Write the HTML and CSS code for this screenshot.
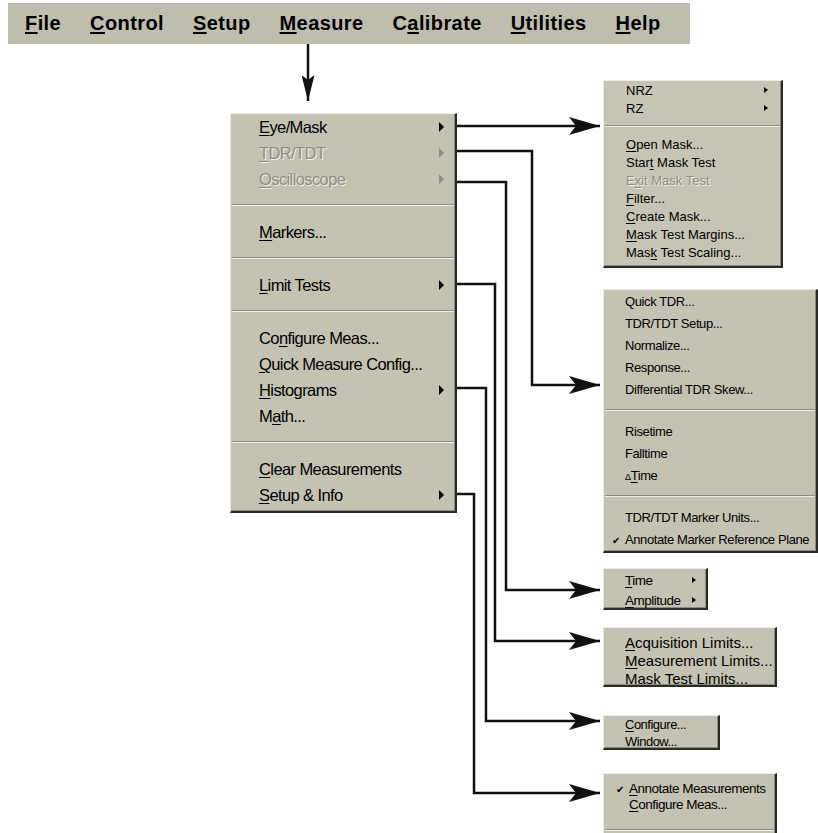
FILE: index.html
```html
<!DOCTYPE html>
<html lang="en">
<head>
    <meta charset="UTF-8">
    <title>Measure Menu Map</title>
    <link rel="stylesheet" href="styles.css">
</head>
<body>
    <div class="page">
        <div class="menubar">
            <span class="bar-item"><u>F</u>ile</span>
            <span class="bar-item"><u>C</u>ontrol</span>
            <span class="bar-item"><u>S</u>etup</span>
            <span class="bar-item"><u>M</u>easure</span>
            <span class="bar-item">C<u>a</u>librate</span>
            <span class="bar-item"><u>U</u>tilities</span>
            <span class="bar-item"><u>H</u>elp</span>
        </div>

        <div class="diagram">
            <div class="main-col">
                <div class="menu main">
                    <div class="item"><span><u>E</u>ye/Mask</span><i class="tri"></i></div>
                    <div class="item off"><span><u>T</u>DR/TDT</span><i class="tri"></i></div>
                    <div class="item off"><span><u>O</u>scilloscope</span><i class="tri"></i></div>
                    <div class="sep"></div>
                    <div class="item"><span><u>M</u>arkers...</span></div>
                    <div class="sep"></div>
                    <div class="item"><span><u>L</u>imit Tests</span><i class="tri"></i></div>
                    <div class="sep"></div>
                    <div class="item"><span>Co<u>n</u>figure Meas...</span></div>
                    <div class="item"><span><u>Q</u>uick Measure Config...</span></div>
                    <div class="item"><span><u>H</u>istograms</span><i class="tri"></i></div>
                    <div class="item"><span>M<u>a</u>th...</span></div>
                    <div class="sep"></div>
                    <div class="item"><span><u>C</u>lear Measurements</span></div>
                    <div class="item"><span><u>S</u>etup &amp; Info</span><i class="tri"></i></div>
                </div>
            </div>

            <div class="sub-col">
                <div class="menu eye">
                    <div class="item"><span>NRZ</span><i class="tri"></i></div>
                    <div class="item"><span>RZ</span><i class="tri"></i></div>
                    <div class="sep"></div>
                    <div class="item"><span><u>O</u>pen Mask...</span></div>
                    <div class="item"><span>Star<u>t</u> Mask Test</span></div>
                    <div class="item off"><span>E<u>x</u>it Mask Test</span></div>
                    <div class="item"><span><u>F</u>ilter...</span></div>
                    <div class="item"><span><u>C</u>reate Mask...</span></div>
                    <div class="item"><span><u>M</u>ask Test Margins...</span></div>
                    <div class="item"><span>Mas<u>k</u> Test Scaling...</span></div>
                </div>

                <div class="menu tdr">
                    <div class="item"><span>Quick TDR...</span></div>
                    <div class="item"><span>TDR/TDT Setup...</span></div>
                    <div class="item"><span>Normalize...</span></div>
                    <div class="item"><span>Response...</span></div>
                    <div class="item"><span>Differential TDR Skew...</span></div>
                    <div class="sep"></div>
                    <div class="item"><span>Risetime</span></div>
                    <div class="item"><span>Falltime</span></div>
                    <div class="item"><span><small>&Delta;</small><u>T</u>ime</span></div>
                    <div class="sep"></div>
                    <div class="item"><span>TDR/TDT Marker Units...</span></div>
                    <div class="item"><span><b class="check">&#10004;</b>Annotate Marker Reference Plane</span></div>
                </div>

                <div class="menu scope">
                    <div class="item"><span><u>T</u>ime</span><i class="tri"></i></div>
                    <div class="item"><span><u>A</u>mplitude</span><i class="tri"></i></div>
                </div>

                <div class="menu limits">
                    <div class="item"><span><u>A</u>cquisition Limits...</span></div>
                    <div class="item"><span><u>M</u>easurement Limits...</span></div>
                    <div class="item"><span>M<u>a</u>sk Test Limits...</span></div>
                </div>

                <div class="menu histo">
                    <div class="item"><span><u>C</u>onfigure...</span></div>
                    <div class="item"><span><u>W</u>indow...</span></div>
                </div>

                <div class="menu info">
                    <div class="item"><span><b class="check">&#10004;</b><u>A</u>nnotate Measurements</span></div>
                    <div class="item"><span><u>C</u>onfigure Meas...</span></div>
                    <div class="sep"></div>
                </div>
            </div>
        </div>

        <!-- connector arrows drawn over the menus -->
        <svg class="wires" width="818" height="833" viewBox="0 0 818 833">
            <defs>
                <marker id="head" markerUnits="userSpaceOnUse" markerWidth="31" markerHeight="18" refX="31" refY="9" orient="auto" viewBox="0 0 31 18">
                    <path d="M0,0 L31,9 L0,18 L7,9 Z" fill="#111"/>
                </marker>
                <marker id="down" markerUnits="userSpaceOnUse" markerWidth="26" markerHeight="13" refX="26" refY="6.5" orient="auto" viewBox="0 0 26 13">
                    <path d="M0,0 L26,6.5 L0,13 L5,6.5 Z" fill="#111"/>
                </marker>
            </defs>
            <g fill="none" stroke="#111" stroke-width="2.5">
                <path d="M308,44 V101" marker-end="url(#down)"/>
                <path d="M457,126 H600" marker-end="url(#head)"/>
                <path d="M457,151 H532 V385 H600" marker-end="url(#head)"/>
                <path d="M457,182 H506 V590 H600" marker-end="url(#head)"/>
                <path d="M457,284 H495 V641 H600" marker-end="url(#head)"/>
                <path d="M457,388 H486 V721 H600" marker-end="url(#head)"/>
                <path d="M457,494 H474 V793 H600" marker-end="url(#head)"/>
            </g>
        </svg>
    </div>
</body>
</html>
```

FILE: styles.css
```css
body {
    margin: 0;
    background: #ffffff;
    color: #000000;
    font-family: 'Liberation Sans', Arial, sans-serif;
}
.page {
    position: relative;
    width: 818px;
    height: 833px;
    overflow: hidden;
}
.menubar {
    display: flex;
    align-items: center;
    gap: 29px;
    width: 682px;
    height: 41px;
    margin: 3px 0 0 8px;
    padding-left: 17px;
    box-sizing: border-box;
    background: #bfbeae;
    font-size: 20px;
    font-weight: bold;
    letter-spacing: 0.4px;
}
.bar-item u {
    text-decoration-thickness: 2px;
    text-underline-offset: 2px;
}
.diagram {
    display: flex;
    align-items: flex-start;
}
.main-col {
    margin: 69px 0 0 230px;
}
.sub-col {
    display: flex;
    flex-direction: column;
    align-items: flex-start;
    margin: 36px 0 0 146px;
}

/* menus */
.menu {
    box-sizing: border-box;
    background: #c4c3b3;
    border-style: solid;
    border-width: 1px 2px 2px 1px;
    border-color: #ecebe2 #2a2a26 #2a2a26 #ecebe2;
    box-shadow: inset -1px -1px 0 #8c8b7e;
    font-family: 'Liberation Sans', Arial, sans-serif;
    overflow: hidden;
}
.item {
    display: flex;
    align-items: center;
    justify-content: space-between;
    white-space: nowrap;
}
.item u {
    text-decoration-thickness: 1px;
    text-underline-offset: 2px;
}
.sep {
    border-top: 1px solid #8d8c80;
    border-bottom: 1px solid #f3f2ea;
}
.tri {
    width: 0;
    height: 0;
    border-left: 5px solid #000;
    border-top: 4px solid transparent;
    border-bottom: 4px solid transparent;
}
.off {
    color: #8e8d82;
    text-shadow: 1px 1px 0 #f1f0e8;
}
.off .tri {
    border-left-color: #8e8d82;
}
.check {
    display: inline-block;
    width: 12px;
    margin-left: -13px;
    margin-right: 1px;
    font-size: 10px;
    font-weight: normal;
    letter-spacing: 0;
}

.main {
    width: 227px;
    height: 400px;
    font-size: 16.5px;
    letter-spacing: -0.6px;
}
.main .item {
    height: 26px;
    padding: 0 11px 0 28px;
}
.main .sep {
    margin: 12px 1px 13px 1px;
}
.main .tri {
    border-left-width: 5px;
    border-top-width: 5px;
    border-bottom-width: 5px;
}

.eye {
    width: 180px;
    height: 188px;
    font-size: 13px;
    background: #c6c5b5;
}
.eye .item {
    height: 18px;
    padding: 0 13px 0 22px;
}
.eye .sep {
    margin: 8px 1px 8px 1px;
}
.eye .tri {
    border-left-width: 4px;
    border-top-width: 3px;
    border-bottom-width: 3px;
}

.tdr {
    width: 215px;
    height: 264px;
    margin-top: 21px;
    font-size: 13px;
    letter-spacing: -0.4px;
}
.tdr .item {
    height: 22px;
    padding-left: 21px;
}
.tdr .sep {
    margin: 9px 1px 9px 1px;
}
.tdr small {
    font-size: 9px;
}

.scope {
    width: 105px;
    height: 42px;
    margin-top: 15px;
    padding-top: 1px;
    font-size: 13.5px;
    letter-spacing: -0.5px;
}
.scope .item {
    height: 20px;
    padding: 0 10px 0 21px;
}
.scope .tri {
    border-left-width: 4px;
    border-top-width: 3px;
    border-bottom-width: 3px;
}

.limits {
    width: 174px;
    height: 60px;
    margin-top: 17px;
    padding-top: 5px;
    font-size: 15px;
}
.limits .item {
    height: 18px;
    padding-left: 21px;
}

.histo {
    width: 117px;
    height: 35px;
    margin-top: 28px;
    font-size: 13px;
    letter-spacing: -0.5px;
}
.histo .item {
    height: 17px;
    padding-left: 21px;
}

.info {
    width: 174px;
    height: 70px;
    margin-top: 23px;
    padding-top: 6px;
    font-size: 13.5px;
    letter-spacing: -0.5px;
}
.info .item {
    height: 16px;
    padding-left: 25px;
}
.info .sep {
    margin: 17px 1px 0 1px;
}

.wires {
    position: absolute;
    top: 0;
    left: 0;
    pointer-events: none;
}
```
